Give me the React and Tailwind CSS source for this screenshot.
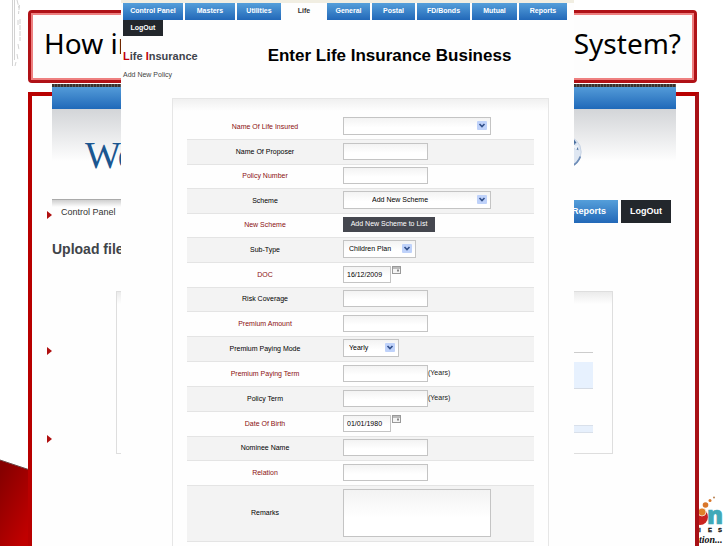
import React from 'react';
import clsx from 'clsx';

const tabs = [
    { label: 'Control Panel', width: 'w-[60px]' },
    { label: 'Masters', width: 'w-[50px]' },
    { label: 'Utilities', width: 'w-[44px]' },
    { label: 'Life', width: 'w-[42px]', active: true },
    { label: 'General', width: 'w-[43px]' },
    { label: 'Postal', width: 'w-[43px]' },
    { label: 'FD/Bonds', width: 'w-[53px]' },
    { label: 'Mutual', width: 'w-[45px]' },
    { label: 'Reports', width: 'w-[48px]' },
];

const rows = [
    { id: 'insured', label: 'Name Of Life Insured', required: true, type: 'select', width: 'w-[148px]', value: '' },
    { id: 'proposer', label: 'Name Of Proposer', type: 'text' },
    { id: 'policy', label: 'Policy Number', required: true, type: 'text', short: true },
    { id: 'scheme', label: 'Scheme', type: 'select', width: 'w-[148px]', indent: true, value: 'Add New Scheme' },
    { id: 'new-scheme', label: 'New Scheme', required: true, type: 'button', value: 'Add New Scheme to List', short: true },
    { id: 'subtype', label: 'Sub-Type', type: 'select', width: 'w-[73px]', value: 'Children Plan' },
    { id: 'doc', label: 'DOC', required: true, type: 'date', value: '16/12/2009' },
    { id: 'risk', label: 'Risk Coverage', type: 'text', short: true },
    { id: 'amount', label: 'Premium Amount', required: true, type: 'text' },
    { id: 'mode', label: 'Premium Paying Mode', type: 'select', width: 'w-14', value: 'Yearly' },
    { id: 'paying-term', label: 'Premium Paying Term', required: true, type: 'text', suffix: '(Years)' },
    { id: 'term', label: 'Policy Term', type: 'text', suffix: '(Years)' },
    { id: 'dob', label: 'Date Of Birth', required: true, type: 'date', value: '01/01/1980' },
    { id: 'nominee', label: 'Nominee Name', type: 'text', short: true },
    { id: 'relation', label: 'Relation', required: true, type: 'text' },
    { id: 'remarks', label: 'Remarks', type: 'textarea' },
];

const box = 'border border-[#c4c4c4] bg-linear-to-b from-[#f3f3f3] to-white to-60% text-[7px] text-black';

function CalendarIcon() {
    return (
        <svg viewBox="0 0 9 8" className="mb-2 h-2 w-[9px]">
            <rect x="0.5" y="0.5" width="8" height="7" fill="#f4f4f4" stroke="#999" />
            <path d="M1 2h7" stroke="#aaa" strokeWidth="1.5" />
            <rect x="5" y="3.5" width="2" height="2" fill="#888" />
        </svg>
    );
}

function SelectBox({ row }) {
    return (
        <div className={clsx('relative flex h-[18px]', row.width)}>
            <select
                id={row.id}
                defaultValue={row.value}
                className={clsx(box, 'block w-full appearance-none rounded-none', row.indent ? 'pl-7' : 'pl-[5px]')}
            >
                <option value={row.value}>{row.value}</option>
            </select>
            <svg viewBox="0 0 10 10" className="pointer-events-none absolute right-1 top-1 size-[10px]">
                <rect width="10" height="9" rx="1" fill="#bfd2fa" />
                <path d="M2.5 3L5 5.5L7.5 3" fill="none" stroke="#34528c" strokeWidth="1.7" />
            </svg>
        </div>
    );
}

function Field({ row }) {
    switch (row.type) {
        case 'select':
            return <SelectBox row={row} />;
        case 'button':
            return (
                <button id={row.id} type="button" className="h-[15px] w-[92px] bg-[#45474f] text-[7px] text-white">
                    {row.value}
                </button>
            );
        case 'date':
            return (
                <>
                    <input id={row.id} defaultValue={row.value} className={clsx(box, 'mr-px h-[17px] w-12 pl-[3px]')} />
                    <CalendarIcon />
                </>
            );
        case 'textarea':
            return <textarea id={row.id} className={clsx(box, 'h-12 w-[148px] resize-none')} />;
        default:
            return (
                <>
                    <input id={row.id} className={clsx(box, 'h-[17px] w-[85px]')} />
                    {row.suffix && <span className="text-[7px] text-[#222]">{row.suffix}</span>}
                </>
            );
    }
}

function PolicyPanel() {
    return (
        <section className="absolute inset-y-0 left-[121px] right-[154px] overflow-hidden border-t-[3px] border-[#f1eee2] bg-[#fefefe]">
            <nav className="flex gap-x-[2px] pl-[2px]">
                {tabs.map((tab) => (
                    <a
                        key={tab.label}
                        href="#"
                        className={clsx(
                            'flex h-[17px] shrink-0 items-center justify-center text-[7px] font-bold',
                            tab.width,
                            tab.active ? 'text-[#333]' : 'bg-linear-to-b from-[#559fda] to-[#2268b8] text-white'
                        )}
                    >
                        {tab.label}
                    </a>
                ))}
            </nav>
            <a href="#" className="ml-[2px] flex h-4 w-10 items-center justify-center bg-[#23272c] text-[7px] font-bold text-white">
                LogOut
            </a>

            <header className="flex items-center gap-[70px] pl-[2px] pt-2">
                <h2 className="text-[11px] font-bold text-[#3f444c]">
                    <span className="text-[#c00008]">L</span>ife <span className="text-[#c00008]">I</span>nsurance
                </h2>
                <h1 className="whitespace-nowrap text-[17px] font-bold leading-6 text-black">Enter Life Insurance Business</h1>
            </header>
            <p className="pl-[2px] text-[7px] leading-[14px] text-[#444]">Add New Policy</p>

            <form className="ml-[51px] mr-[25px] mt-4 border border-[#e6e6e6] bg-linear-to-b from-[#f0f0f0] to-[#fefefe] to-[12px] px-[14px] pb-10 pt-4">
                {rows.map((row) => (
                    <div
                        key={row.id}
                        className={clsx(
                            'flex items-center border-b border-[#e4e4e4] even:bg-[#f3f3f3]',
                            row.type === 'textarea' ? 'h-14' : row.short ? 'h-6' : 'h-[25px]'
                        )}
                    >
                        <label
                            htmlFor={row.id}
                            className={clsx('w-[156px] shrink-0 text-center text-[7px]', row.required ? 'text-[#8b1010]' : 'text-black')}
                        >
                            {row.label}
                        </label>
                        <div className="flex items-center pb-[2px]">
                            <Field row={row} />
                        </div>
                    </div>
                ))}
            </form>
        </section>
    );
}

function Globe() {
    return (
        <svg viewBox="0 0 40 40" className="size-9">
            <circle cx="20" cy="20" r="18" fill="#dfe7f2" stroke="#c3d0e2" strokeWidth="1" />
            <path d="M24 5l6 1 3 4-3 1 4 3 1 4-4-2-3 3-4-3 3-5z" fill="#4a6f9f" />
            <path d="M30 12l5 1-2 4-4-1z" fill="#eef3f9" />
            <path d="M6 12l8-5 5 6-7 6z" fill="#5c80ad" />
            <path d="M37 25c-2 6-6 9-10 11" fill="none" stroke="#6e8db8" strokeWidth="2" />
        </svg>
    );
}

/* Older screen that sits behind the policy panel */
function UploadPage() {
    return (
        <div className="-mt-3 mr-[19px] flex-1">
            <div className="h-[3px] bg-[repeating-linear-gradient(90deg,#3a332f_0_2px,#605b58_2px_3px)]" />
            <div className="h-[22px] bg-linear-to-b from-[#539bd8] to-[#1f69b9]" />
            <div className="flex h-[90px] items-start justify-between bg-linear-to-b from-[#d3d5d8] to-[#fefefe] to-[52px] pl-[33px] pr-[93px] pt-[25px]">
                <span className="font-['Liberation_Serif',serif] text-[38px] leading-[42px] text-[#1b5690]">We</span>
                <Globe />
            </div>
            <nav className="flex h-6 items-stretch justify-between pr-[5px] text-[9px]">
                <a href="#" className="w-[120px] border-t border-[#aaa] bg-linear-to-b from-[#cfcfcf] to-[#fefefe] to-[7px] pl-[9px] leading-6 text-[#333]">
                    Control Panel
                </a>
                <div className="flex gap-[3px] pt-px font-bold text-white">
                    <a href="#" className="flex w-[60px] items-center bg-linear-to-b from-[#559fda] to-[#2268b8] pl-[14px]">Reports</a>
                    <a href="#" className="flex w-[50px] items-center justify-center bg-[#23272c]">LogOut</a>
                </div>
            </nav>
            <h2 className="pt-4 text-[14px] font-bold leading-5 text-[#3f4449]">Upload file</h2>
            <div className="ml-16 mr-[63px] mt-8 h-[163px] border border-[#dedede] bg-linear-to-b from-[#ebebeb] to-[#fefefe] to-[12px] pl-5 pr-[19px] pt-[60px]">
                <div className="h-px bg-[#ccc]" />
                <div className="mt-[9px] h-[27px] border-b border-[#d5dbe4] bg-[#e7f1fe]" />
                <div className="mt-9 h-2 border-y border-[#d9e0ea] bg-[#e7f0fc]" />
            </div>
        </div>
    );
}

function SlideArt() {
    return (
        <>
            <svg viewBox="0 0 24 72" className="absolute left-0 top-0 h-[72px] w-6" fill="none" stroke="#d2d2d2">
                <path d="M12.5 0V66M14.5 0V60" strokeWidth="1" />
                <path d="M17 0l2 8M19.500 5l-1 9M18 20v5M20 19v22M18 44l1 6M17 54l1 6M15 66l1-4" strokeDasharray="5 1" />
            </svg>
            <svg viewBox="0 0 30 88" className="absolute bottom-0 left-0 h-[88px] w-[30px]">
                <defs>
                    <linearGradient id="ribbon" x1="0" y1="0" x2="0.7" y2="1">
                        <stop offset="0.1" stopColor="#860000" />
                        <stop offset="1" stopColor="#c00000" />
                    </linearGradient>
                </defs>
                <path d="M0 2L30 12V88H0z" fill="url(#ribbon)" />
                <path d="M0 2L30 12" stroke="#6b4a4a" />
            </svg>
            <svg viewBox="0 0 48 56" className="absolute bottom-0 right-0 h-14 w-12">
                <circle cx="20" cy="27" r="8" fill="#c9231f" />
                <circle cx="22" cy="22" r="4" fill="#e08128" stroke="#fff" strokeWidth="0.7" />
                <circle cx="25.500" cy="15" r="2.800" fill="#d9772b" />
                <circle cx="30" cy="10.500" r="1.500" fill="#d9772b" />
                <circle cx="34" cy="7.500" r="1" fill="#b98252" />
                <text x="27" y="34" fontSize="24" fontWeight="800" fontFamily="Open Sans, sans-serif" fill="#3fa9b8" stroke="#3fa9b8" strokeWidth="0.7">n</text>
                <text x="19 28 38" y="42" fontSize="6" fontWeight="bold" fontFamily="Liberation Sans, sans-serif" fill="#111" stroke="#111" strokeWidth="0.3">IES</text>
                <text x="19" y="53" fontSize="10" fontStyle="italic" fontWeight="bold" fontFamily="Liberation Serif, serif" fill="#111">tion...</text>
            </svg>
        </>
    );
}

export default function App() {
    return (
        <main className="relative flex h-screen flex-col overflow-hidden bg-white font-['Liberation_Sans',Arial,sans-serif]">
            <SlideArt />

            {/* Slide title */}
            <div className="relative ml-7 mr-[31px] mt-[10px] h-[73px] shrink-0 rounded-sm border-[3px] border-[#b01217]">
                <div className="flex h-full items-center justify-between border-2 border-[#ee8080] bg-[#fdfdfd] px-[11px] pb-2 font-['Noto_Sans',sans-serif] text-[28px] text-black">
                    <span>How in</span>
                    <span>System?</span>
                </div>
            </div>

            {/* Slide body */}
            <div className="relative ml-7 mr-[29px] mt-[9px] flex flex-1 border-4 border-b-0 border-[#b80000] border-r-[#a81016] bg-[#fefefe]">
                <ul className="ml-[15px] w-[5px] shrink-0 pt-[115px]">
                    <li className="mb-32 h-2 bg-[#b01010] [clip-path:polygon(0_0,100%_50%,0_100%)]" />
                    <li className="mb-20 h-2 bg-[#b01010] [clip-path:polygon(0_0,100%_50%,0_100%)]" />
                    <li className="h-2 bg-[#b01010] [clip-path:polygon(0_0,100%_50%,0_100%)]" />
                </ul>
                <UploadPage />
            </div>

            <PolicyPanel />
        </main>
    );
}
